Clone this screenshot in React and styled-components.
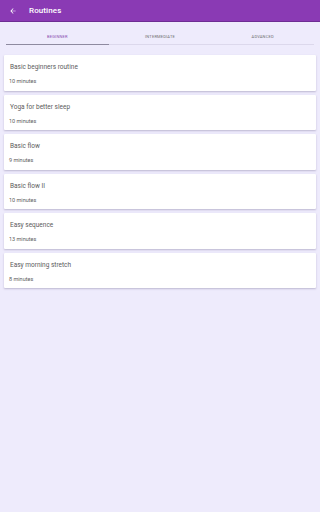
import styled, { createGlobalStyle } from "styled-components";

const GlobalStyle = createGlobalStyle`
  html, body {
    margin: 0;
    padding: 0;
    background: #eeebfc;
    font-family: Roboto, "Liberation Sans", sans-serif;
  }
`;

const Page = styled.div`
  width: 320px;
  height: 512px;
  background: #eeebfc;
  display: flex;
  flex-direction: column;
`;

const AppBar = styled.header`
  height: 21px;
  background: #8a3ab4;
  border-bottom: 1px solid #6e2d93;
  display: flex;
  align-items: center;
  padding-left: 9px;
  gap: 12px;
  color: #fff;
`;

const Title = styled.h1`
  margin: 0;
  font-size: 8px;
  font-weight: 500;
  letter-spacing: 0.1px;
`;

const Tabs = styled.nav`
  display: flex;
  margin: 0 6px;
  height: 22px;
  border-bottom: 1px solid #dcd8ec;
`;

const Tab = styled.div`
  flex: 1;
  display: flex;
  align-items: center;
  justify-content: center;
  padding-top: 6px;
  font-size: 4px;
  letter-spacing: 0.2px;
  text-transform: uppercase;
  color: ${(p) => (p.$active ? "#8a4ab0" : "#707070")};
  border-bottom: 1.5px solid ${(p) => (p.$active ? "#8e8aa0" : "transparent")};
  margin-bottom: -1px;
`;

const List = styled.main`
  display: flex;
  flex-direction: column;
  gap: 4px;
  padding: 10px 4px;
`;

const Card = styled.div`
  background: #fff;
  height: 35.5px;
  border-radius: 1px;
  box-shadow: 0 1px 2px rgba(60, 50, 100, 0.28);
  display: flex;
  flex-direction: column;
  padding: 8px 5px 0;
  box-sizing: border-box;
`;

const CardTitle = styled.div`
  font-size: 6.5px;
  line-height: 8px;
  color: #5c5c5c;
  padding-left: 1px;
`;

const Duration = styled.div`
  font-size: 5.5px;
  line-height: 7px;
  color: #5c5c5c;
  margin-top: 7px;
`;

const routines = [
  ["Basic beginners routine", "10 minutes"],
  ["Yoga for better sleep", "10 minutes"],
  ["Basic flow", "9 minutes"],
  ["Basic flow II", "10 minutes"],
  ["Easy sequence", "13 minutes"],
  ["Easy morning stretch", "8 minutes"],
];

function BackArrow() {
  return (
    <svg width="8" height="8" viewBox="0 0 24 24" fill="#fff">
      <path d="M20 11H7.83l5.59-5.59L12 4l-8 8 8 8 1.41-1.41L7.83 13H20v-2z" />
    </svg>
  );
}

export default function App() {
  return (
    <Page>
      <GlobalStyle />
      <AppBar>
        <BackArrow />
        <Title>Routines</Title>
      </AppBar>
      <Tabs>
        <Tab $active>Beginner</Tab>
        <Tab>Intermediate</Tab>
        <Tab>Advanced</Tab>
      </Tabs>
      <List>
        {routines.map(([name, time]) => (
          <Card key={name}>
            <CardTitle>{name}</CardTitle>
            <Duration>{time}</Duration>
          </Card>
        ))}
      </List>
    </Page>
  );
}
